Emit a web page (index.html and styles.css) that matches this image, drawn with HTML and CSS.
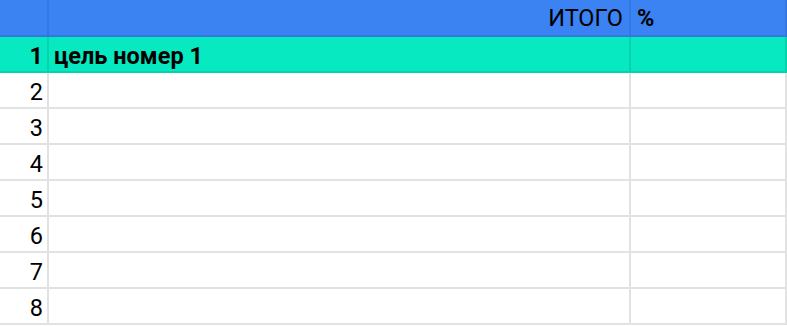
FILE: index.html
```html
<!DOCTYPE html>
<html lang="ru">
<head>
<meta charset="utf-8">
<title>Sheet</title>
<link rel="stylesheet" href="styles.css">
</head>
<body>
<div class="sheet">
  <div class="cell head num"></div>
  <div class="cell head main right">ИТОГО</div>
  <div class="cell head last bold">%</div>

  <div class="cell goal num bold">1</div>
  <div class="cell goal main bold">цель номер 1</div>
  <div class="cell goal last"></div>

  <div class="cell num">2</div><div class="cell main"></div><div class="cell last"></div>
  <div class="cell num">3</div><div class="cell main"></div><div class="cell last"></div>
  <div class="cell num">4</div><div class="cell main"></div><div class="cell last"></div>
  <div class="cell num">5</div><div class="cell main"></div><div class="cell last"></div>
  <div class="cell num">6</div><div class="cell main"></div><div class="cell last"></div>
  <div class="cell num">7</div><div class="cell main"></div><div class="cell last"></div>
  <div class="cell num">8</div><div class="cell main"></div><div class="cell last"></div>
</div>
</body>
</html>
```
FILE: styles.css
```css
* { box-sizing: border-box; }
html, body { margin: 0; padding: 0; background: #ffffff; }
body { font-family: Roboto, "Liberation Sans", sans-serif; color: #000; }

.sheet {
  display: grid;
  grid-template-columns: 49px 582px 156px;
  grid-template-rows: 37px;
  grid-auto-rows: 36px;
  width: 787px;
}

.cell {
  border-right: 2px solid #e2e2e2;
  border-bottom: 2px solid #e2e2e2;
  font-size: 23.5px;
  line-height: 28px;
  padding: 5px 6px 0 6px;
  white-space: nowrap;
  overflow: hidden;
}

.num { text-align: right; padding-right: 4px; padding-left: 2px; }
.right { text-align: right; }
.bold { font-weight: 700; }
.main { padding-left: 5px; }

.head {
  background: #3b82f2;
  border-color: #3577e2;
  padding-top: 4px;
}

.goal {
  background: #06e9c1;
  border-color: #05d3ae;
}
```
